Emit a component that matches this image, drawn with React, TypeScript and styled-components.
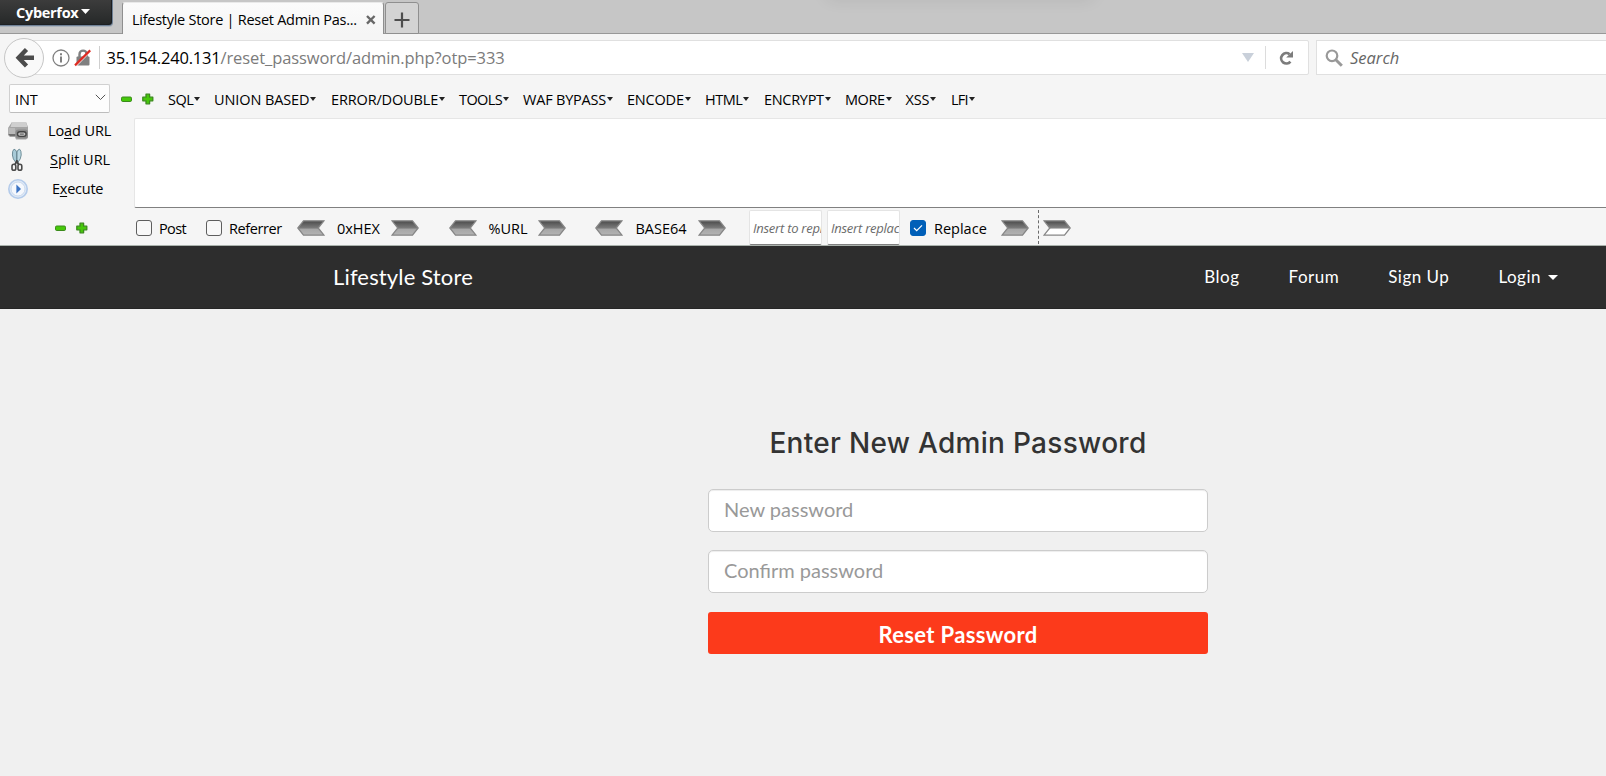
import React from 'react';
import styled, { createGlobalStyle } from 'styled-components';

const GlobalStyle = createGlobalStyle`
  *, *::before, *::after { box-sizing: border-box; }
  body { margin: 0; background: #f0f0f0; overflow: hidden; }
  svg { display: block; flex: none; }
`;

const uiFont = '"Open Sans", "Noto Sans", sans-serif';
const siteFont = 'Lato, "Open Sans", sans-serif';

const Screen = styled.div`
  width: 100%;
  height: 100vh;
  min-height: 776px;
  display: flex;
  flex-direction: column;
  overflow: hidden;
  background: #f0f0f0;
  font-family: ${uiFont};
  color: #000;
  white-space: nowrap;
`;

/* ---------- Tab strip ---------- */

const TabStrip = styled.header`
  position: relative;
  flex: none;
  display: flex;
  align-items: flex-end;
  height: 34px;
  background: #c6c6c6;
  box-shadow: inset 0 -1px 0 #989898;
  overflow: hidden;
`;

const TopShade = styled.div`
  position: absolute;
  top: -13px;
  left: 830px;
  width: 260px;
  height: 8px;
  box-shadow: 0 0 18px 2px rgba(0, 0, 0, 0.12);
`;

const AppButton = styled.button`
  align-self: flex-start;
  display: flex;
  align-items: flex-start;
  gap: 3px;
  width: 113px;
  height: 26px;
  padding: 3px 0 0 16px;
  border: 0 solid #6f8196;
  border-width: 0 1px 1px 0;
  border-radius: 0 0 4px 0;
  background: linear-gradient(#3c3c3c, #2c2e2e 70%, #242626);
  box-shadow: 0 1px 0 #a9b1ba, inset -1px -1px 0 #1c1f22;
  color: #fff;
  font: 700 14.5px/20px ${uiFont};
  letter-spacing: -0.3px;
  svg { margin-top: 6px; }
`;

const Tab = styled.div`
  display: flex;
  align-items: center;
  width: 262px;
  height: 32px;
  margin-left: 9px;
  padding: 2px 0 0 9px;
  border: 1px solid #8f8f8f;
  border-bottom: 0;
  border-top-color: #e9e9e9;
  border-radius: 3px 3px 0 0;
  background: linear-gradient(#fbfbfb, #f5f5f5);
  font-size: 14.5px;
  line-height: 20px;
`;

const TabTitle = styled.span`
  width: 234px;
  letter-spacing: -0.27px;
`;

const NewTab = styled.button`
  display: flex;
  align-items: center;
  justify-content: center;
  width: 34px;
  height: 32px;
  margin-left: 1px;
  padding: 3px 0 0;
  border: 1px solid #8f8f8f;
  border-radius: 3px 3px 0 0;
  background: #d3d3d3;
`;

/* ---------- Address row ---------- */

const AddressRow = styled.div`
  flex: none;
  display: flex;
  align-items: center;
  height: 47px;
  padding-left: 4px;
  background: #f5f5f5;
`;

const BackButton = styled.button`
  z-index: 1;
  flex: none;
  display: flex;
  align-items: center;
  justify-content: center;
  width: 40px;
  height: 40px;
  padding: 0 0 0 1px;
  border: 1px solid #c6c6c6;
  border-radius: 50%;
  background: #f9f9f9;
`;

const UrlBox = styled.div`
  flex: none;
  display: flex;
  align-items: center;
  width: 1279px;
  height: 35px;
  margin-left: -14px;
  padding-left: 21px;
  border: 1px solid #e0e0e0;
  border-radius: 2px;
  background: #fff;
  font-size: 16.5px;
`;

const Divider = styled.span<{ $tone?: string }>`
  width: 1px;
  height: 23px;
  background: ${(p) => p.$tone ?? '#cfcfcf'};
`;

const Host = styled.span`
  margin-left: 6.5px;
  letter-spacing: -0.2px;
`;

const Path = styled.span`
  flex: 1;
  color: #7b7b7b;
  letter-spacing: -0.09px;
`;

const UrlTools = styled.div`
  display: flex;
  align-items: center;
  gap: 11px;
  padding-right: 14px;
`;

const SearchBox = styled.div`
  flex: 1;
  display: flex;
  align-items: center;
  gap: 7px;
  height: 35px;
  margin-left: 7px;
  padding-left: 8px;
  border: 1px solid #e0e0e0;
  border-right: 0;
  background: #fff;
  color: #666;
  font-size: 16.5px;
  font-style: italic;
`;

/* ---------- Injection toolbar ---------- */

const Toolbar = styled.section`
  flex: none;
  display: flex;
  flex-direction: column;
  height: 165px;
  border-bottom: 1px solid #aab2ac;
  background: #f5f5f5;
  font-size: 14.5px;
`;

const MenuRow = styled.div`
  display: flex;
  align-items: center;
  height: 35px;
  padding-left: 9px;
`;

const Select = styled.div`
  display: flex;
  align-items: center;
  justify-content: space-between;
  width: 101px;
  height: 29px;
  margin-right: 11px;
  padding: 2px 3px 0 5px;
  border: 1px solid #d0d0d0;
  border-bottom-color: #bdbdbd;
  border-radius: 2px;
  background: #fdfdfd;
  letter-spacing: -0.1px;
  svg { margin-top: -5px; }
`;

const PlusMinus = styled.div`
  display: flex;
  align-items: center;
  gap: 10px;
`;

const Menus = styled.nav`
  display: flex;
  margin-left: 14px;
  padding-top: 2px;
`;

const MenuItem = styled.span<{ $slot: number; $spacing?: number }>`
  display: flex;
  align-items: center;
  width: ${(p) => p.$slot}px;
  letter-spacing: ${(p) => p.$spacing ?? 0}px;
  svg { margin: -2px 0 0 1px; }
`;

const Middle = styled.div`
  display: flex;
  height: 92px;
`;

const Actions = styled.div`
  width: 134px;
`;

const Action = styled.div`
  display: flex;
  align-items: center;
  height: 29px;
  padding-left: 7px;
`;

const ActionLabel = styled.span<{ $indent: number; $spacing: number }>`
  margin-left: ${(p) => p.$indent}px;
  letter-spacing: ${(p) => p.$spacing}px;
  u { text-decoration-thickness: 1px; text-underline-offset: 2px; }
`;

const UrlArea = styled.div`
  flex: 1;
  margin-top: 2px;
  border: 1px solid #e6e6e6;
  border-right: 0;
  border-bottom-color: #808080;
  border-radius: 2px 0 0 2px;
  background: #fff;
`;

const OptionRow = styled.div`
  display: flex;
  align-items: center;
  height: 37px;
  padding: 3px 0 0 55px;
`;

const Check = styled.span<{ $on?: boolean; $before: number }>`
  flex: none;
  display: flex;
  align-items: center;
  justify-content: center;
  width: 16px;
  height: 16px;
  margin: 0 7px 0 ${(p) => p.$before}px;
  border: 1px solid ${(p) => (p.$on ? '#005fb8' : '#5e5e5e')};
  border-radius: 3px;
  background: ${(p) => (p.$on ? '#005fb8' : '#f8f8f8')};
`;

const OptionLabel = styled.span<{ $slot: number; $spacing?: number }>`
  width: ${(p) => p.$slot}px;
  letter-spacing: ${(p) => p.$spacing ?? 0}px;
`;

const Codec = styled.div<{ $before: number }>`
  display: flex;
  align-items: center;
  margin-left: ${(p) => p.$before}px;
`;

const CodecLabel = styled(OptionLabel)`
  padding-left: 1px;
  text-align: center;
`;

const SmallInput = styled.input<{ $before: number }>`
  width: 73px;
  height: 35px;
  margin: -1px 0 0 ${(p) => p.$before}px;
  padding: 0 0 0 3px;
  border: 1px solid #e4e4e4;
  border-bottom-color: #808080;
  border-radius: 2px;
  background: #fff;
  font: italic 13px ${uiFont};
  letter-spacing: -0.25px;
  outline: none;
  &::placeholder { color: #6b6b6b; opacity: 1; }
`;

const DashedLine = styled.span`
  height: 34px;
  margin: -2px 4px 0 9px;
  border-left: 1px dashed #6a6a6a;
`;

/* ---------- Site ---------- */

const SiteNav = styled.nav`
  flex: none;
  display: flex;
  justify-content: space-between;
  height: 63px;
  padding: 0 48px 0 333px;
  border-bottom: 1px solid #262626;
  background: #2d2d2d;
  color: #fff;
  font-family: ${siteFont};
`;

const Brand = styled.span`
  font-size: 22px;
  line-height: 62px;
  letter-spacing: 0.15px;
`;

const Links = styled.div`
  display: flex;
  gap: 49px;
  font-size: 17px;
  line-height: 64px;
  letter-spacing: 0.5px;
`;

const NavLink = styled.span`
  display: flex;
  align-items: center;
  gap: 7px;
`;

const ResetForm = styled.form`
  display: flex;
  flex-direction: column;
  width: 500px;
  margin: 117px 0 0 708px;
  font-family: ${siteFont};
`;

const Heading = styled.h1`
  margin: 0 0 28px;
  text-align: center;
  color: #333;
  font: 500 28px/35px Inter, sans-serif;
  letter-spacing: 0.3px;
`;

const Field = styled.input`
  height: 43px;
  margin-bottom: 18px;
  padding: 0 15px 3px;
  border: 1px solid #ccc;
  border-radius: 5px;
  background: #fff;
  box-shadow: inset 0 1px 1px rgba(0, 0, 0, 0.075);
  font: 400 20px ${siteFont};
  outline: none;
  &::placeholder { color: #999; opacity: 1; }
`;

const Submit = styled.button`
  height: 42px;
  margin-top: 1px;
  padding: 2px 0 0;
  border: 0;
  border-radius: 3px;
  background: #fc3a1b;
  color: #fff;
  font: 700 22px ${siteFont};
  letter-spacing: 0.35px;
`;

/* ---------- Icons ---------- */

const Minus = () => (
  <svg width="11" height="12">
    <rect x="0.5" y="4" width="10" height="4.5" rx="1.2" fill="#46c80a" stroke="#3b8a1c" />
  </svg>
);

const Plus = () => (
  <svg width="12" height="12">
    <path d="M4 1.2h3.6v3h3.2v3.6H7.6v3H4v-3H.8V4.2H4z" fill="#46c80a" stroke="#3b8a1c" strokeWidth="1.3" strokeLinejoin="round" />
  </svg>
);

const Caret = ({ w, h, fill }: { w: number; h: number; fill: string }) => (
  <svg width={w} height={h}>
    <path d={`M0 0H${w}L${w / 2} ${h}z`} fill={fill} />
  </svg>
);

const Arrow = ({ left, light }: { left?: boolean; light?: boolean }) => (
  <svg width="28" height="16" viewBox="0 0 28 16">
    <defs>
      <linearGradient id={light ? 'arrowLight' : 'arrowDark'} x1="0" y1="0" x2="0" y2="1">
        <stop offset="0" stopColor="#4a4a4a" />
        <stop offset="0.5" stopColor={light ? '#858585' : '#7b7b7b'} />
        <stop offset="0.58" stopColor={light ? '#fff' : '#a6a6a6'} />
        <stop offset="1" stopColor={light ? '#fff' : '#b4b4b4'} />
      </linearGradient>
    </defs>
    <path
      d="M1 .8h20.5L27.2 8l-5.7 7.2H1L6.8 8z"
      transform={left ? 'matrix(-1 0 0 1 28 0)' : undefined}
      fill={`url(#${light ? 'arrowLight' : 'arrowDark'})`}
      stroke="#868686"
      strokeWidth="1.3"
    />
  </svg>
);

const BackArrow = () => (
  <svg width="20" height="20" viewBox="0 0 20 20" fill="none" stroke="#4c4c4c" strokeWidth="4.4">
    <path d="M11.5 1.5 3.6 9.8l7.9 8.3M4 9.8h15" />
  </svg>
);

const InfoIcon = () => (
  <svg width="18" height="18" viewBox="0 0 18 18">
    <circle cx="9" cy="9" r="8" fill="none" stroke="#808080" strokeWidth="1.3" />
    <path d="M8 4.2h2v2H8zM8 7.6h2v6H8z" fill="#808080" />
  </svg>
);

const LockIcon = () => (
  <svg width="18" height="18" viewBox="0 0 18 18">
    <path d="M5.5 9V5.2a3.6 3.6 0 0 1 7.2 0V9" fill="none" stroke="#808080" strokeWidth="2.4" />
    <rect x="2.5" y="7.6" width="13" height="9" rx="1" fill="#808080" />
    <path d="M2.2 16.6 17 1.8" stroke="#fff" strokeWidth="1.5" />
    <path d="M1 16.4 16.2 1.4" stroke="#dd2b22" strokeWidth="2.2" />
  </svg>
);

const ReloadIcon = () => (
  <svg width="15" height="16" viewBox="0 0 15 16">
    <path d="M11.4 11.6A5.2 5.2 0 1 1 10.6 4.2" fill="none" stroke="#7c7c7c" strokeWidth="2.7" />
    <path d="M14 1v6.6H7.2z" fill="#7c7c7c" />
  </svg>
);

const SearchIcon = () => (
  <svg width="18" height="18" viewBox="0 0 18 18" fill="none" stroke="#999">
    <circle cx="7" cy="6.8" r="5.3" strokeWidth="2.2" />
    <path d="m10.8 10.8 6 6" strokeWidth="3" />
  </svg>
);

const DriveIcon = () => (
  <svg width="22" height="20" viewBox="0 0 22 20">
    <path d="M5 1h14l2 5v11l-2 1.5H9L8 16H3l-2-2V7z" fill="#a5a5a5" />
    <path d="M5 1h14l1.5 5H3.5z" fill="#cfcfcf" />
    <path d="M1.5 7H8v6H1.500z" fill="#b9b9b9" />
    <path d="M1.5 13h7v2H3z" fill="#6e6e6e" />
    <rect x="8.5" y="8.5" width="12.5" height="9" rx="3" fill="#8a8a8a" />
    <rect x="10.5" y="10.8" width="8.6" height="4.6" rx="2.3" fill="#c4c4c4" stroke="#444" strokeWidth="1.4" />
    <path d="M12.8 13.1h4" stroke="#555" />
  </svg>
);

const ScissorsIcon = () => (
  <svg width="22" height="24" viewBox="0 0 22 24">
    <path d="M7 1.2Q5.2 2.5 5.4 7q.2 4 3.4 7.500l.8-1V4Q9 1.500 7 1.200z" fill="#a9cbd8" stroke="#648490" strokeWidth=".9" />
    <path d="M12.6 1.2q1.8 1.300 1.600 5.800-.2 4-3.400 7.500l-.8-1V4q.6-2.500 2.600-2.800z" fill="#bcd9e3" stroke="#648490" strokeWidth=".9" />
    <path d="m10.2 12.5-2.200 4M9.400 12.500l2.200 4" stroke="#444" strokeWidth="1.8" />
    <rect x="5" y="16.3" width="3.8" height="6" rx="1.9" fill="none" stroke="#4b4b4b" strokeWidth="1.6" />
    <rect x="11" y="16.3" width="3.8" height="6" rx="1.9" fill="none" stroke="#4b4b4b" strokeWidth="1.6" />
  </svg>
);

const PlayIcon = () => (
  <svg width="22" height="22" viewBox="0 0 22 22">
    <circle cx="11" cy="11" r="9.2" fill="#dfeaf8" stroke="#b4cbea" strokeWidth="1.6" />
    <circle cx="11" cy="11" r="7" fill="#f5f8fd" stroke="#cbd9ec" />
    <path d="m9.4 6.6 4.6 4.4-4.600 4.400z" fill="#3d74c4" />
  </svg>
);

const MENUS: [string, number, number][] = [
  ['SQL', 46, -0.5],
  ['UNION BASED', 117, -0.1],
  ['ERROR/DOUBLE', 128, -0.15],
  ['TOOLS', 64, -0.6],
  ['WAF BYPASS', 104, -0.2],
  ['ENCODE', 78, -0.2],
  ['HTML', 59, -0.5],
  ['ENCRYPT', 81, -0.3],
  ['MORE', 60.5, -0.45],
  ['XSS', 45.5, -0.2],
  ['LFI', 24, -0.8],
];

const CODECS: [string, number, number][] = [
  ['0xHEX', 12, 66],
  ['%URL', 30, 61],
  ['BASE64', 29, 75],
];

export default function App() {
  return (
    <Screen>
      <GlobalStyle />
      <TabStrip>
        <TopShade />
        <AppButton>
          Cyberfox
          <Caret w={9} h={5} fill="#fff" />
        </AppButton>
        <Tab>
          <TabTitle>Lifestyle Store | Reset Admin Pas...</TabTitle>
          <svg width="10" height="10" stroke="#686868" strokeWidth="2.4">
            <path d="m1 1 7.6 7.6M8.6 1 1 8.6" />
          </svg>
        </Tab>
        <NewTab>
          <svg width="16" height="16" stroke="#4d4d4d" strokeWidth="2.2">
            <path d="M8 .5v15M.5 8h15" />
          </svg>
        </NewTab>
      </TabStrip>

      <AddressRow>
        <BackButton><BackArrow /></BackButton>
        <UrlBox>
          <InfoIcon />
          <Codec $before={4}><LockIcon /></Codec>
          <Codec $before={7}><Divider /></Codec>
          <Host>35.154.240.131</Host>
          <Path>/reset_password/admin.php?otp=333</Path>
          <UrlTools>
            <Caret w={12} h={9} fill="#c9d0da" />
            <Divider $tone="#dcdcdc" />
            <Codec $before={2}><ReloadIcon /></Codec>
          </UrlTools>
        </UrlBox>
        <SearchBox>
          <SearchIcon />
          Search
        </SearchBox>
      </AddressRow>

      <Toolbar>
        <MenuRow>
          <Select>
            INT
            <svg width="11" height="7" fill="none" stroke="#555">
              <path d="M.8.8 5.5 5.5 10.200.8" />
            </svg>
          </Select>
          <PlusMinus><Minus /><Plus /></PlusMinus>
          <Menus>
            {MENUS.map(([label, slot, spacing]) => (
              <MenuItem key={label} $slot={slot} $spacing={spacing}>
                {label}
                <Caret w={6} h={4} fill="#222" />
              </MenuItem>
            ))}
          </Menus>
        </MenuRow>
        <Middle>
          <Actions>
            <Action>
              <DriveIcon />
              <ActionLabel $indent={19} $spacing={-0.1}>Lo<u>a</u>d URL</ActionLabel>
            </Action>
            <Action>
              <ScissorsIcon />
              <ActionLabel $indent={21} $spacing={0}><u>S</u>plit URL</ActionLabel>
            </Action>
            <Action>
              <PlayIcon />
              <ActionLabel $indent={23} $spacing={-0.25}>E<u>x</u>ecute</ActionLabel>
            </Action>
          </Actions>
          <UrlArea />
        </Middle>
        <OptionRow>
          <PlusMinus><Minus /><Plus /></PlusMinus>
          <Check $before={48} />
          <OptionLabel $slot={47} $spacing={-0.6}>Post</OptionLabel>
          <Check $before={0} />
          <OptionLabel $slot={56} $spacing={-0.4}>Referrer</OptionLabel>
          {CODECS.map(([label, before, slot]) => (
            <Codec key={label} $before={before}>
              <Arrow left />
              <CodecLabel $slot={slot}>{label}</CodecLabel>
              <Arrow />
            </Codec>
          ))}
          <SmallInput $before={23} placeholder="Insert to replace" />
          <SmallInput $before={5} placeholder="Insert replacement" />
          <Check $on $before={10}>
            <svg width="10" height="8" fill="none" stroke="#fff" strokeWidth="1.2">
              <path d="m1 4 2.7 2.7L9 1.3" />
            </svg>
          </Check>
          <Codec $before={1}>
            <OptionLabel $slot={67}>Replace</OptionLabel>
            <Arrow />
          </Codec>
          <DashedLine />
          <Arrow light />
        </OptionRow>
      </Toolbar>

      <SiteNav>
        <Brand>Lifestyle Store</Brand>
        <Links>
          <NavLink>Blog</NavLink>
          <NavLink>Forum</NavLink>
          <NavLink>Sign Up</NavLink>
          <NavLink>
            Login
            <Caret w={10} h={5} fill="#fff" />
          </NavLink>
        </Links>
      </SiteNav>

      <ResetForm>
        <Heading>Enter New Admin Password</Heading>
        <Field type="password" placeholder="New password" />
        <Field type="password" placeholder="Confirm password" />
        <Submit type="button">Reset Password</Submit>
      </ResetForm>
    </Screen>
  );
}
